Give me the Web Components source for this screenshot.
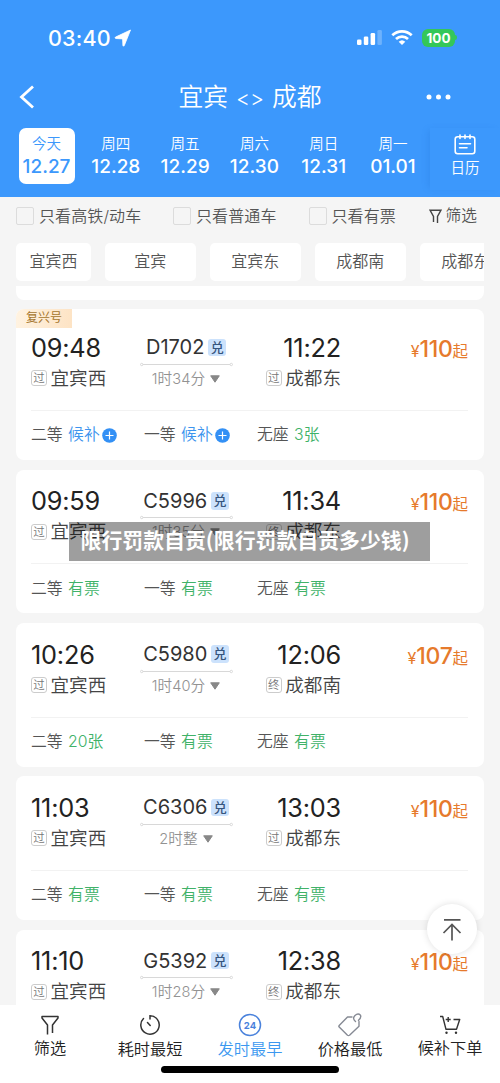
<!DOCTYPE html>
<html lang="zh-CN">
<head>
<meta charset="utf-8">
<title>宜宾 - 成都</title>
<style>
html,body{margin:0;padding:0}
body{width:500px;height:1083px;overflow:hidden;background:#f5f5f5;font-family:Inter,"Noto Sans CJK SC",sans-serif;color:#333}
</style>
</head>
<body>
<ticket-app></ticket-app>
<script>
const BASE = '*{box-sizing:border-box}svg{display:block;flex:none}';
function define(name, render) {
  customElements.define(name, class extends HTMLElement {
    connectedCallback() {
      if (this.shadowRoot) return;
      const t = document.createElement('template');
      t.innerHTML = render(this);
      this.attachShadow({mode: 'open'}).appendChild(t.content.cloneNode(true));
    }
  });
}
const a = (el, n) => el.getAttribute(n) || '';

define('status-bar', () => `<style>${BASE}
:host{display:flex;height:75px;padding:0 43px 0 48px;align-items:center;color:#fff}
.time{font-size:21.5px;font-weight:500;line-height:24px;letter-spacing:.2px;width:62px;white-space:nowrap}
.loc{margin-left:4px}.sp{flex:1}.wifi{margin-left:9px}
.bat{margin-left:9px;width:33px;height:18px;border-radius:6px;background:#34c759;font-size:13.5px;font-weight:700;line-height:18px;text-align:center}
.cap{width:2px;height:5px;border-radius:0 2px 2px 0;background:#34c759}
</style><span class="time">03:40</span>
<svg class="loc" width="18" height="18" viewBox="0 0 18 18"><path d="M16.5 1 1.5 8.1q-1.3 1 .4 1.4l6.7.4.3 6.6q.6 1.500 1.400 0z" fill="#fff" stroke="#fff" stroke-width=".8" stroke-linejoin="round"/></svg>
<span class="sp"></span>
<svg width="25" height="17" viewBox="0 0 25 17" fill="#fff"><rect x="0" y="10.500" width="4.500" height="5.500" rx="1.300"/><rect x="6.800" y="7.500" width="4.500" height="8.500" rx="1.300"/><rect x="13.600" y="4" width="4.500" height="12" rx="1.300"/><rect x="20.400" y="1" width="4.500" height="15" rx="1.300" opacity=".25"/></svg>
<svg class="wifi" width="22" height="17" viewBox="0 0 22 17" fill="none" stroke="#fff" stroke-width="2.700"><path d="M1.300 6.300a14 14 0 0 1 19.400 0M5 10.100a8.700 8.700 0 0 1 12 0"/><path d="M11 16 7.700 12.700a4.800 4.800 0 0 1 6.600 0z" fill="#fff" stroke="none"/></svg>
<span class="bat">100</span><span class="cap"></span>`);

define('title-bar', () => `<style>${BASE}
:host{display:grid;grid-template-columns:100px 1fr 100px;height:44px;align-items:center;color:#fff}
.back{margin-left:18px}
.t{text-align:center;font-size:24.800px;line-height:36px;white-space:nowrap;font-weight:350;font-family:Inter,"Noto Sans CJK SC",sans-serif}
.t span{font-size:21.500px;font-weight:300;margin:0 1px}
.more{margin-left:26px}
</style><svg class="back" width="18" height="24" viewBox="0 0 18 24" fill="none" stroke="#fff" stroke-width="2.800"><path d="M15 1.500 3.500 12 15 22.500"/></svg>
<div class="t">宜宾 <span>&lt;&gt;</span> 成都</div>
<svg class="more" width="25" height="6" viewBox="0 0 25 6" fill="#fff"><circle cx="3" cy="3" r="2.500"/><circle cx="12.500" cy="3" r="2.500"/><circle cx="22" cy="3" r="2.500"/></svg>`);

define('date-cell', el => `<style>${BASE}
:host{display:flex;flex-direction:column;align-items:center;width:56px;height:56px;border-radius:7px;color:#fff;padding-top:4px}
:host([active]){background:#fff;color:#3c98fc}
.w{font-size:14.500px;line-height:23px;font-weight:350}
.d{font-size:19px;line-height:24px;font-weight:450;white-space:nowrap}
</style><span class="w">${a(el,'week')}</span><span class="d"><slot></slot></span>`);

define('date-strip', () => `<style>${BASE}
:host{display:flex;height:78px;padding:9px 0 0 18.500px}
.days{display:flex;gap:13.300px;width:411.500px;overflow:hidden;flex:none}
.cal{flex:1;height:62px;display:flex;flex-direction:column;align-items:center;color:#fff;font-size:14.500px;line-height:21px;padding-top:6px;box-shadow:-4px 0 6px -2px rgba(30,110,210,.22);font-weight:350}
.cal span{margin-top:2px}
</style><div class="days"><date-cell active week="今天">12.27</date-cell><date-cell week="周四">12.28</date-cell><date-cell week="周五">12.29</date-cell><date-cell week="周六">12.30</date-cell><date-cell week="周日">12.31</date-cell><date-cell week="周一">01.01</date-cell></div>
<div class="cal"><svg width="22" height="21" viewBox="0 0 22 21" fill="none" stroke="#fff" stroke-width="1.600" stroke-linecap="round"><rect x="1.200" y="2.800" width="19.600" height="17" rx="2.500"/><path d="M6 1v3.500M11 1v3.500M16 1v3.500M5.500 9.700h11M5.500 13.800h7.500"/></svg><span>日历</span></div>`);

define('check-item', () => `<style>${BASE}
:host{display:flex;align-items:center;gap:5px;font-size:16px;line-height:24px;color:#555;white-space:nowrap;letter-spacing:.1px;font-weight:350}
i{width:18px;height:17.500px;border:1.500px solid #dcdcdc;border-radius:2px;flex:none}
</style><i></i><span><slot></slot></span>`);

define('filter-row', () => `<style>${BASE}
:host{display:grid;grid-template-columns:157px 135.500px 120px auto;height:38px;padding-left:16px;align-items:center}
.f{display:flex;align-items:center;gap:4px;font-size:15.700px;line-height:24px;color:#555;font-weight:350}
</style><check-item>只看高铁/动车</check-item><check-item>只看普通车</check-item><check-item>只看有票</check-item>
<div class="f"><svg width="13" height="15" viewBox="0 0 13 15" fill="none" stroke="#444" stroke-width="1.400"><path d="M4.500 13V7.500L1 1.200h11L8.500 7.500V14"/></svg>筛选</div>`);

define('chip-row', () => `<style>${BASE}
:host{display:flex;gap:13.500px;height:38px;margin:8px 16px 0;overflow:hidden}
span{flex:none;width:91.500px;background:#fff;border-radius:5px;text-align:center;font-size:16px;line-height:37px;color:#555;font-weight:350}
span:nth-child(2){width:75px}
</style><span>宜宾西</span><span>宜宾</span><span>宜宾东</span><span>成都南</span><span>成都东</span>`);

define('stop-name', el => `<style>${BASE}
:host{display:flex;align-items:center;gap:3.500px;font-size:18.600px;line-height:27px;color:#444;white-space:nowrap;font-weight:350}
i{font-style:normal;width:16px;height:16px;border:1px solid #ccc;border-radius:3px;font-size:11.500px;line-height:14px;text-align:center;color:#777;flex:none}
</style><i>${a(el,'kind')}</i><span><slot></slot></span>`);

define('seat-item', el => {
  const s = a(el,'state'), wait = s === '候补';
  return `<style>${BASE}
:host{display:flex;align-items:center;font-size:15.800px;line-height:24px;color:#555;white-space:nowrap;font-weight:350}
b{font-weight:inherit;margin-left:5.500px;color:${wait ? '#3c94ee' : '#40b268'}}
svg{margin-left:2px}
</style><slot></slot><b>${s}</b>${wait ? '<svg width="15" height="15" viewBox="0 0 15 15"><circle cx="7.500" cy="7.500" r="7.300" fill="#3390f5"/><path d="M3.500 7.500h8M7.500 3.500v8" stroke="#fff" stroke-width="1.200"/></svg>' : ''}`;
});

define('train-card', el => {
  const seats = a(el,'seats').split(',');
  return `<style>${BASE}
:host{display:block;position:relative;height:143.600px;padding:15.700px 16px 0 15px;border-radius:8px;background:#fff;flex:none}
:host([tag]){height:150.500px;padding-top:22.500px}
.tag{position:absolute;left:0;top:0;width:56px;height:18.500px;border-radius:8px 0 0 0;background:linear-gradient(100deg,#fff3e2,#fde3c4);color:#a5762e;font-size:12px;line-height:17px;text-align:center}
.top{display:grid;grid-template-columns:109px 92px 109px 1fr;height:78px}
.c{display:flex;flex-direction:column}
.time{font-size:25.300px;line-height:32px;letter-spacing:-.2px;white-space:nowrap;color:#222}
.r{align-items:flex-end}
.m{align-items:center}
.no{display:flex;align-items:center;gap:4px;height:31px;font-size:20px;color:#333;white-space:nowrap}
.no i{font-style:normal;width:17.500px;height:17.500px;border-radius:3px;background:#cce2fc;color:#36557e;font-size:13px;line-height:17px;text-align:center;font-weight:500}
.line{width:93px;height:5px;margin-top:-1px}
.dur{display:flex;align-items:center;gap:5px;font-size:14.600px;line-height:22px;color:#929292;font-weight:350;white-space:nowrap;height:24px;letter-spacing:.1px}
stop-name{margin-top:1px}
.price{display:flex;align-items:baseline;justify-content:flex-end;color:#e67a2c;font-size:23px;line-height:32px;padding-top:1px;letter-spacing:-.300px;white-space:nowrap;font-weight:500}
.price small{font-size:15.500px;font-weight:400;letter-spacing:0}
.price .y{font-size:16px}
.seats{display:grid;grid-template-columns:113px 113px 113px;border-top:1.500px solid #f2f2f2;padding-top:12.500px}
</style>${a(el,'tag') ? `<span class="tag">${a(el,'tag')}</span>` : ''}
<div class="top"><div class="c"><span class="time">${a(el,'dep')}</span><stop-name kind="过">宜宾西</stop-name></div>
<div class="c m"><div class="no">${a(el,'no')}<i>兑</i></div><svg class="line" viewBox="0 0 93 5" fill="#fff" stroke="#d8d8d8"><path d="M3 2.500h87"/><circle cx="1.700" cy="2.500" r="1.200"/><circle cx="91.300" cy="2.500" r="1.200"/></svg><div class="dur">${a(el,'dur')}<svg width="10" height="8" viewBox="0 0 10 8"><path d="M.7.800h8.600L5 7.200z" fill="#888" stroke="#888" stroke-linejoin="round"/></svg></div></div>
<div class="c r"><span class="time">${a(el,'arr')}</span><stop-name kind="${a(el,'kind')}">${a(el,'to')}</stop-name></div>
<div class="price"><small class="y">¥</small>${a(el,'price')}<small>起</small></div></div>
<div class="seats"><seat-item state="${seats[0]}">二等</seat-item><seat-item state="${seats[1]}">一等</seat-item><seat-item state="${seats[2]}">无座</seat-item></div>`;
});

define('train-list', () => `<style>${BASE}
:host{display:flex;flex-direction:column;gap:9.700px;flex:1;min-height:0;overflow:hidden;margin:5px 16px 0}
.prev{height:13.800px;flex:none;background:#fff;border-radius:0 0 8px 8px}
</style><div class="prev"></div><slot></slot>`);

define('nav-item', () => `<style>${BASE}
:host{display:flex;flex-direction:column;align-items:center;width:100px;padding-top:7px;font-size:16.200px;line-height:24px;color:#222;white-space:nowrap;font-weight:350}
:host([active]){color:#3c98f0}
.i{height:25px;display:flex;align-items:center}
.l{position:relative;top:var(--dy,0)}
</style><span class="i"><slot name="icon"></slot></span><span class="l"><slot></slot></span>`);

define('bottom-nav', () => `<style>${BASE}
:host{display:flex;flex-direction:column;height:78px;flex:none;background:#fff}
.n{display:flex;height:61px}
.bar{width:178px;height:6.500px;border-radius:4px;background:#000;margin:0 auto}
</style><div class="n">
<nav-item style="--dy:-1.500px"><svg slot="icon" width="18" height="20" viewBox="0 0 18 20" fill="none" stroke="#333" stroke-width="1.500" stroke-linejoin="round"><path d="M6.500 19.500V10L1 3V1.500h16V3l-5.500 7v8"/></svg>筛选</nav-item>
<nav-item><svg slot="icon" width="22" height="22" viewBox="0 0 22 22" fill="none" stroke="#333" stroke-width="1.500" stroke-linecap="round"><path d="M11 5V1.800a9.200 9.200 0 1 1-6.500 2.700M8.500 8.500l2.700 3"/></svg>耗时最短</nav-item>
<nav-item active><svg slot="icon" width="24" height="24" viewBox="0 0 24 24"><circle cx="12" cy="12" r="10.500" fill="none" stroke="#4a82dc" stroke-width="1.500"/><text x="12" y="15.500" text-anchor="middle" font-family="Inter" font-size="9.500" font-weight="700" fill="#4a82dc">24</text></svg>发时最早</nav-item>
<nav-item><svg slot="icon" width="24" height="24" viewBox="0 0 24 24" fill="none" stroke="#868a94" stroke-width="1.400" stroke-linejoin="round" stroke-linecap="round"><path d="M14 4H9.500L1.200 12.500q-.7.800 0 1.600L9.500 22.300q1 .7 2 0l9.500-9V8.500M17.500 8.500q-3.500-3-.5-6Q20-.2 22.500 2.200q1 2.500-2 5"/></svg>价格最低</nav-item>
<nav-item style="--dy:-1.500px"><svg slot="icon" width="22" height="21" viewBox="0 0 22 21" fill="none" stroke="#333" stroke-width="1.400" stroke-linejoin="round"><path d="M1 2.500h2.700L7 15.300h10.500L20.700 5.500H14.500M9.200 3v5M6.700 5.500h5"/><circle cx="7.500" cy="18.800" r="1.200" fill="#333" stroke="none"/><circle cx="17" cy="18.800" r="1.200" fill="#333" stroke="none"/></svg>候补下单</nav-item>
</div><div class="bar"></div>`);

define('top-button', () => `<style>${BASE}
:host{position:absolute;left:426.500px;top:904px;width:50px;height:50px;border-radius:50%;background:#fff;box-shadow:0 0 7px rgba(0,0,0,.13);display:grid;place-items:center}
</style><svg width="20" height="23" viewBox="0 0 20 23" fill="none" stroke="#555" stroke-width="1.700"><path d="M2 1.800h16.500M10 22.500V6.500M1.500 15 10 6.500l8.500 8.500"/></svg>`);

define('caption-banner', () => `<style>${BASE}
:host{position:absolute;left:69px;top:522px;width:361px;height:39px;background:rgba(0,0,0,.38);color:#fff;font:700 20.900px/35px "Noto Sans CJK SC",sans-serif;padding-left:11.500px;white-space:nowrap}
</style><slot></slot>`);

define('ticket-app', () => `<style>${BASE}
:host{position:relative;display:flex;flex-direction:column;width:500px;height:1083px;overflow:hidden;background:#f5f5f5}
header{background:#3c98fc;height:197px;flex:none}
</style><header><status-bar></status-bar><title-bar></title-bar><date-strip></date-strip></header>
<filter-row></filter-row><chip-row></chip-row>
<train-list>
<train-card tag="复兴号" dep="09:48" arr="11:22" no="D1702" dur="1时34分" kind="过" to="成都东" price="110" seats="候补,候补,3张"></train-card>
<train-card dep="09:59" arr="11:34" no="C5996" dur="1时35分" kind="终" to="成都东" price="110" seats="有票,有票,有票"></train-card>
<train-card dep="10:26" arr="12:06" no="C5980" dur="1时40分" kind="终" to="成都南" price="107" seats="20张,有票,有票"></train-card>
<train-card dep="11:03" arr="13:03" no="C6306" dur="2时整" kind="过" to="成都东" price="110" seats="有票,有票,有票"></train-card>
<train-card dep="11:10" arr="12:38" no="G5392" dur="1时28分" kind="终" to="成都东" price="110" seats="有票,有票,有票"></train-card>
</train-list>
<bottom-nav></bottom-nav><top-button></top-button><caption-banner>限行罚款自贡(限行罚款自贡多少钱)</caption-banner>`);
</script>
</body>
</html>
